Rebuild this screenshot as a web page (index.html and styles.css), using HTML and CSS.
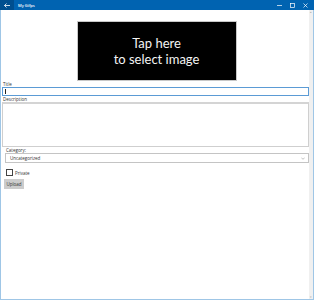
FILE: index.html
```html
<!DOCTYPE html>
<html lang="en">
<head>
  <meta charset="UTF-8">
  <meta name="viewport" content="width=device-width, initial-scale=1.0">
  <title>My Gifps</title>
  <link rel="stylesheet" href="styles.css">
</head>
<body>
  <div class="window">
    <div class="titlebar">
      <div class="back-button">
        <svg width="6" height="5" viewBox="0 0 6 5"><path d="M0.5 2.5H6M2.5 0.5L0.5 2.5L2.5 4.5" stroke="#fff" stroke-width="0.8" fill="none"/></svg>
      </div>
      <span class="app-title">My Gifps</span>
      <div class="controls">
        <svg width="5" height="5" viewBox="0 0 5 5"><path d="M0 2.5H5" stroke="#fff" stroke-width="0.7"/></svg>
        <svg width="5" height="5" viewBox="0 0 5 5"><rect x="0.5" y="0.5" width="4" height="4" stroke="#fff" stroke-width="0.7" fill="none"/></svg>
        <svg width="5" height="5" viewBox="0 0 5 5"><path d="M0.5 0.5L4.5 4.5M4.5 0.5L0.5 4.5" stroke="#fff" stroke-width="0.7"/></svg>
      </div>
    </div>

    <div class="client">
      <div class="content">
        <div class="image-picker">Tap here<br>to select image</div>

        <div class="field">
          <label class="field-label">Title</label>
          <div class="text-box active"><span class="caret"></span></div>
        </div>

        <div class="field">
          <label class="field-label">Description</label>
          <div class="text-area"></div>
        </div>

        <div class="field indented">
          <label class="field-label">Category:</label>
          <div class="combo-box">
            <span>Uncategorized</span>
            <svg width="4" height="3" viewBox="0 0 4 3"><path d="M0.3 0.6L2 2.3L3.7 0.6" stroke="#999" stroke-width="0.6" fill="none"/></svg>
          </div>
        </div>

        <div class="check-row">
          <span class="check-box"></span>
          <span class="check-label">Private</span>
        </div>

        <button class="upload-button">Upload</button>
      </div>

      <div class="scrollbar">
        <span class="arrow">&#9652;</span>
        <span class="arrow">&#9662;</span>
      </div>
    </div>
  </div>
</body>
</html>
```

FILE: styles.css
```css
body {
  margin: 0;
  padding: 0;
  font-family: "Open Sans", "Liberation Sans", sans-serif;
  background-color: #fff;
}
.window {
  width: 314px;
  height: 300px;
  display: flex;
  flex-direction: column;
}
.titlebar {
  height: 10px;
  display: flex;
  align-items: center;
  background-color: #0063b1;
  color: white;
}
.back-button {
  width: 14px;
  height: 10px;
  display: flex;
  align-items: center;
  justify-content: center;
  background-color: #004f8f;
}
.app-title {
  margin-left: 4px;
  font-size: 4px;
  font-weight: 600;
}
.controls {
  margin-left: auto;
  margin-right: 6px;
  display: flex;
  gap: 8px;
}
.client {
  flex: 1;
  display: flex;
  border: 1px solid #9fc6e6;
  border-top: none;
}
.content {
  flex: 1;
  display: flex;
  flex-direction: column;
  padding: 11px 0 0 1px;
}
.image-picker {
  align-self: center;
  width: 158px;
  height: 58px;
  margin-left: 2px;
  border: 1px solid #c8c8c8;
  background-color: #000;
  color: #f4f4f4;
  font-family: "Lato", "Liberation Sans", sans-serif;
  font-size: 13px;
  line-height: 16px;
  text-align: center;
  display: flex;
  align-items: center;
  justify-content: center;
}
.field {
  display: flex;
  flex-direction: column;
}
.field.indented {
  padding-left: 3px;
}
.field-label {
  font-size: 4.5px;
  line-height: 5px;
  padding-left: 1px;
  margin-top: 1px;
  color: #333;
}
.text-box {
  height: 7px;
  border: 1px solid #5b9bd5;
  display: flex;
  align-items: center;
  padding-left: 2px;
}
.caret {
  width: 1px;
  height: 5px;
  background-color: #222;
}
.text-area {
  height: 42px;
  border: 1px solid #cfcfcf;
  border-top: 2px solid #d4d4d4;
}
.combo-box {
  height: 8px;
  border: 1px solid #c4c4c4;
  display: flex;
  align-items: center;
  justify-content: space-between;
  padding: 0 3px 0 4px;
  font-size: 4.5px;
  color: #333;
}
.check-row {
  display: flex;
  align-items: center;
  margin: 6px 0 0 4px;
}
.check-box {
  width: 5px;
  height: 5px;
  border: 1px solid #444;
}
.check-label {
  margin-left: 2px;
  font-size: 4.5px;
  color: #333;
}
.upload-button {
  align-self: flex-start;
  margin: 3px 0 0 2px;
  width: 20px;
  height: 10px;
  padding: 0;
  border: none;
  background-color: #cccccc;
  font-family: inherit;
  font-size: 4.5px;
  color: #333;
}
.scrollbar {
  width: 4px;
  background-color: #f0f0f0;
  display: flex;
  flex-direction: column;
  justify-content: space-between;
  align-items: center;
}
.arrow {
  font-size: 3px;
  line-height: 4px;
  color: #aaa;
}
```
